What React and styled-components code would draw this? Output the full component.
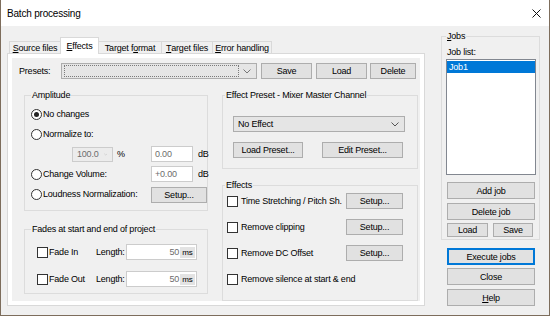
import React from "react";
import styled, { createGlobalStyle } from "styled-components";

const GlobalStyle = createGlobalStyle`
  html, body {
    margin: 0;
    padding: 0;
    background: #ffffff;
  }
  * {
    box-sizing: border-box;
  }
`;

const Window = styled.div`
  width: 550px;
  height: 316px;
  border: 1px solid #7d6d5c;
  border-top: none;
  background: #f0f0f0;
  display: flex;
  flex-direction: column;
  font-family: "Liberation Sans", Arial, sans-serif;
  font-size: 9px;
  letter-spacing: -0.2px;
  color: #000;
  overflow: hidden;
`;

const TitleBar = styled.div`
  height: 26px;
  flex-shrink: 0;
  background: #ffffff;
  display: flex;
  align-items: center;
  justify-content: space-between;
  padding: 0 8px 0 6px;
`;

const Title = styled.span`
  font-size: 10px;
  letter-spacing: -0.2px;
`;

const Body = styled.div`
  flex: 1;
  display: flex;
  gap: 16px;
  padding: 0 9px 0 6px;
`;

// Tab control
const TabControl = styled.div`
  width: 418px;
  margin-top: 11px;
  display: flex;
  flex-direction: column;
`;

const TabStrip = styled.div`
  height: 16px;
  display: flex;
  align-items: flex-end;
  padding-left: 3px;
`;

const Tab = styled.div`
  width: ${({ w }) => w}px;
  height: ${({ active }) => (active ? 17 : 12)}px;
  margin-bottom: ${({ active }) => (active ? -1 : 0)}px;
  margin-left: -1px;
  border: 1px solid #d9d9d9;
  border-bottom: none;
  background: ${({ active }) => (active ? "#ffffff" : "#f0f0f0")};
  display: flex;
  align-items: center;
  justify-content: center;
  position: relative;
  z-index: ${({ active }) => (active ? 2 : 1)};
  white-space: nowrap;
`;

const Panel = styled.div`
  height: 253px;
  border: 1px solid #d9d9d9;
  background: #ffffff;
  padding: 4px;
`;

const Page = styled.div`
  height: 100%;
  background: #f0f0f0;
  padding: 5px 2px 0 7px;
`;

const PresetsRow = styled.div`
  height: 16px;
  display: flex;
  align-items: center;
`;

const Label = styled.span`
  width: ${({ w }) => (w ? `${w}px` : "auto")};
  white-space: nowrap;
  margin-left: ${({ ml }) => ml || 0}px;
`;

const Combo = styled.div`
  width: ${({ w }) => w}px;
  height: ${({ h }) => h || 16}px;
  margin-left: ${({ ml }) => ml || 0}px;
  border: 1px solid ${({ disabled }) => (disabled ? "#cccccc" : "#adadad")};
  background: ${({ disabled }) => (disabled ? "#ececec" : "#e5e5e5")};
  color: ${({ disabled }) => (disabled ? "#6d6d6d" : "#000")};
  display: flex;
  align-items: center;
  padding: 1px 5px 1px 2px;
  gap: 4px;
`;

const ComboText = styled.div`
  flex: 1;
  height: 100%;
  display: flex;
  align-items: center;
  padding-left: 1px;
  border: 1px dotted ${({ focus }) => (focus ? "#7a7a7a" : "transparent")};
`;

const Button = styled.div`
  width: ${({ w }) => w}px;
  height: ${({ h }) => h || 16}px;
  margin-left: ${({ ml }) => ml || 0}px;
  margin-top: ${({ mt }) => mt || 0}px;
  border: 1px solid ${({ focused }) => (focused ? "#0078d7" : "#adadad")};
  box-shadow: ${({ focused }) => (focused ? "inset 0 0 0 1px #0078d7" : "none")};
  background: #e1e1e1;
  display: flex;
  align-items: center;
  justify-content: center;
  white-space: nowrap;
  flex-shrink: 0;
`;

const Columns = styled.div`
  display: flex;
  gap: 14px;
  margin: 16px 0 0 5px;
`;

const Column = styled.div`
  width: ${({ w }) => w}px;
  display: flex;
  flex-direction: column;
`;

const Group = styled.div`
  height: ${({ h }) => h}px;
  margin-top: ${({ mt }) => mt || 0}px;
  border: 1px solid #dcdcdc;
  display: flex;
  flex-direction: column;
`;

const Caption = styled.div`
  align-self: flex-start;
  height: 11px;
  line-height: 11px;
  margin: -6px 0 0 ${({ indent }) => indent}px;
  padding: 0 1px;
  background: #f0f0f0;
  white-space: nowrap;
`;

const AmpGrid = styled.div`
  display: grid;
  grid-template-columns: 115px 42px auto;
  grid-template-rows: repeat(5, 16px);
  column-gap: 5px;
  row-gap: 4px;
  padding: 5px 0 0 6px;
`;

const Cell = styled.div`
  grid-column: ${({ span }) => span || "auto"};
  display: flex;
  align-items: center;
  margin-top: ${({ mt }) => mt || 0}px;
  white-space: nowrap;
`;

const Radio = styled.span`
  width: 11px;
  height: 11px;
  border-radius: 50%;
  border: 1px solid #333;
  background: #fff;
  margin-right: 1px;
  display: flex;
  align-items: center;
  justify-content: center;
  flex-shrink: 0;

  &::after {
    content: "";
    width: 5px;
    height: 5px;
    border-radius: 50%;
    background: ${({ checked }) => (checked ? "#222" : "transparent")};
  }
`;

const Check = styled.span`
  width: 11px;
  height: 11px;
  border: 1px solid #333;
  background: #fff;
  margin-right: ${({ gap }) => gap || 1}px;
  flex-shrink: 0;
`;

const TextBox = styled.div`
  width: ${({ w }) => w}px;
  height: 16px;
  border: 1px solid #cccccc;
  background: #ffffff;
  color: #6d6d6d;
  display: flex;
  align-items: center;
  justify-content: ${({ right }) => (right ? "flex-end" : "flex-start")};
  padding: 0 1px 0 3px;
`;

const Unit = styled.span`
  height: 11px;
  width: 15px;
  margin-left: 1px;
  background: #e3e3e3;
  color: #000;
  font-size: 8px;
  display: flex;
  align-items: center;
  justify-content: center;
`;

const FadeGrid = styled.div`
  display: grid;
  grid-template-columns: 59px 30px 71px;
  grid-template-rows: 16px 16px;
  row-gap: 11px;
  padding: 9px 0 0 12px;
`;

const PresetBody = styled.div`
  display: flex;
  flex-direction: column;
  padding: 15px 0 0 10px;
  gap: 10px;
`;

const ButtonRow = styled.div`
  display: flex;
  gap: ${({ gap }) => gap}px;
  margin-left: ${({ ml }) => ml || 0}px;
  margin-top: ${({ mt }) => mt || 0}px;
`;

const EffectsGrid = styled.div`
  display: grid;
  grid-template-columns: 119px 57px;
  grid-template-rows: repeat(4, 16px);
  row-gap: 10px;
  padding: 2px 0 0 4px;
`;

// Right column
const SideColumn = styled.div`
  width: 99px;
  margin-top: 10px;
  display: flex;
  flex-direction: column;
`;

const ListBox = styled.div`
  width: 90px;
  height: 116px;
  margin: 1px 0 0 4px;
  border: 1px solid #828790;
  background: #fff;
  padding-top: 1px;
`;

const ListItem = styled.div`
  height: 12px;
  padding-left: 2px;
  display: flex;
  align-items: center;
  background: ${({ selected }) => (selected ? "#0078d7" : "transparent")};
  color: ${({ selected }) => (selected ? "#fff" : "#000")};
`;

const Chevron = ({ color = "#555" }) => (
  <svg width="8" height="5" viewBox="0 0 8 5">
    <polyline points="0.5,0.5 4,4 7.5,0.5" fill="none" stroke={color} strokeWidth="1" />
  </svg>
);

const CloseX = () => (
  <svg width="9" height="9" viewBox="0 0 9 9">
    <path d="M0.5 0.5 L8.5 8.5 M8.5 0.5 L0.5 8.5" stroke="#111" strokeWidth="1" fill="none" />
  </svg>
);

const tabs = [
  { label: <><u>S</u>ource files</>, w: 52 },
  { label: <><u>E</u>ffects</>, w: 39, active: true },
  { label: <>Target f<u>o</u>rmat</>, w: 64 },
  { label: <><u>T</u>arget files</>, w: 52 },
  { label: <><u>E</u>rror handling</>, w: 60 },
];

export default function App() {
  return (
    <>
      <GlobalStyle />
      <Window>
        <TitleBar>
          <Title>Batch processing</Title>
          <CloseX />
        </TitleBar>
        <Body>
          <TabControl>
            <TabStrip>
              {tabs.map((t, i) => (
                <Tab key={i} w={t.w} active={t.active}>
                  {t.label}
                </Tab>
              ))}
            </TabStrip>
            <Panel>
              <Page>
                <PresetsRow>
                  <Label w={42}>Presets:</Label>
                  <Combo w={196}>
                    <ComboText focus />
                    <Chevron color="#777" />
                  </Combo>
                  <Button w={51} ml={4}>Save</Button>
                  <Button w={51} ml={4}>Load</Button>
                  <Button w={46} ml={3}>Delete</Button>
                </PresetsRow>

                <Columns>
                  <Column w={184}>
                    <Group h={116}>
                      <Caption indent={6}>Amplitude</Caption>
                      <AmpGrid>
                        <Cell span="1 / 4">
                          <Radio checked />No changes
                        </Cell>
                        <Cell span="1 / 4">
                          <Radio />Normalize to:
                        </Cell>
                        <Cell>
                          <Combo w={41} h={15} ml={41} disabled>
                            <ComboText>100.0</ComboText>
                            <Chevron color="#b5b5b5" />
                          </Combo>
                          <Label ml={4}>%</Label>
                        </Cell>
                        <Cell>
                          <TextBox w={42}>0.00</TextBox>
                        </Cell>
                        <Cell>dB</Cell>
                        <Cell>
                          <Radio />Change Volume:
                        </Cell>
                        <Cell>
                          <TextBox w={42}>+0.00</TextBox>
                        </Cell>
                        <Cell>dB</Cell>
                        <Cell>
                          <Radio />Loudness Normalization:
                        </Cell>
                        <Cell span="2 / 4" mt={2}>
                          <Button w={56}>Setup...</Button>
                        </Cell>
                      </AmpGrid>
                    </Group>

                    <Group h={65} mt={18}>
                      <Caption indent={6}>Fades at start and end of project</Caption>
                      <FadeGrid>
                        <Cell>
                          <Check />Fade In
                        </Cell>
                        <Cell>Length:</Cell>
                        <TextBox w={71} right>
                          50<Unit>ms</Unit>
                        </TextBox>
                        <Cell>
                          <Check />Fade Out
                        </Cell>
                        <Cell>Length:</Cell>
                        <TextBox w={71} right>
                          50<Unit>ms</Unit>
                        </TextBox>
                      </FadeGrid>
                    </Group>
                  </Column>

                  <Column w={196}>
                    <Group h={74}>
                      <Caption indent={2}>Effect Preset - Mixer Master Channel</Caption>
                      <PresetBody>
                        <Combo w={172}>
                          <ComboText>No Effect</ComboText>
                          <Chevron color="#555" />
                        </Combo>
                        <ButtonRow gap={19}>
                          <Button w={70}>Load Preset...</Button>
                          <Button w={81}>Edit Preset...</Button>
                        </ButtonRow>
                      </PresetBody>
                    </Group>

                    <Group h={116} mt={16}>
                      <Caption indent={2}>Effects</Caption>
                      <EffectsGrid>
                        <Cell>
                          <Check gap={3} />Time Stretching / Pitch Sh.
                        </Cell>
                        <Button w={57}>Setup...</Button>
                        <Cell>
                          <Check gap={3} />Remove clipping
                        </Cell>
                        <Button w={57}>Setup...</Button>
                        <Cell>
                          <Check gap={3} />Remove DC Offset
                        </Cell>
                        <Button w={57}>Setup...</Button>
                        <Cell span="1 / 3">
                          <Check gap={3} />Remove silence at start &amp; end
                        </Cell>
                      </EffectsGrid>
                    </Group>
                  </Column>
                </Columns>
              </Page>
            </Panel>
          </TabControl>

          <SideColumn>
            <Group h={204}>
              <Caption indent={4}>
                <u>J</u>obs
              </Caption>
              <Label ml={5} style={{ marginTop: 5, lineHeight: "11px" }}>
                Job list:
              </Label>
              <ListBox>
                <ListItem selected>Job1</ListItem>
              </ListBox>
              <Button w={88} h={17} ml={5} mt={7}>Add job</Button>
              <Button w={88} h={17} ml={5} mt={4}>Delete job</Button>
              <ButtonRow gap={5} ml={5} mt={3}>
                <Button w={41} h={14}>Load</Button>
                <Button w={40} h={14}>Save</Button>
              </ButtonRow>
            </Group>
            <Button w={88} h={17} ml={6} mt={8} focused>Execute jobs</Button>
            <Button w={88} h={17} ml={6} mt={3}>Close</Button>
            <Button w={88} h={17} ml={6} mt={4}>
              <u>H</u>elp
            </Button>
          </SideColumn>
        </Body>
      </Window>
    </>
  );
}
